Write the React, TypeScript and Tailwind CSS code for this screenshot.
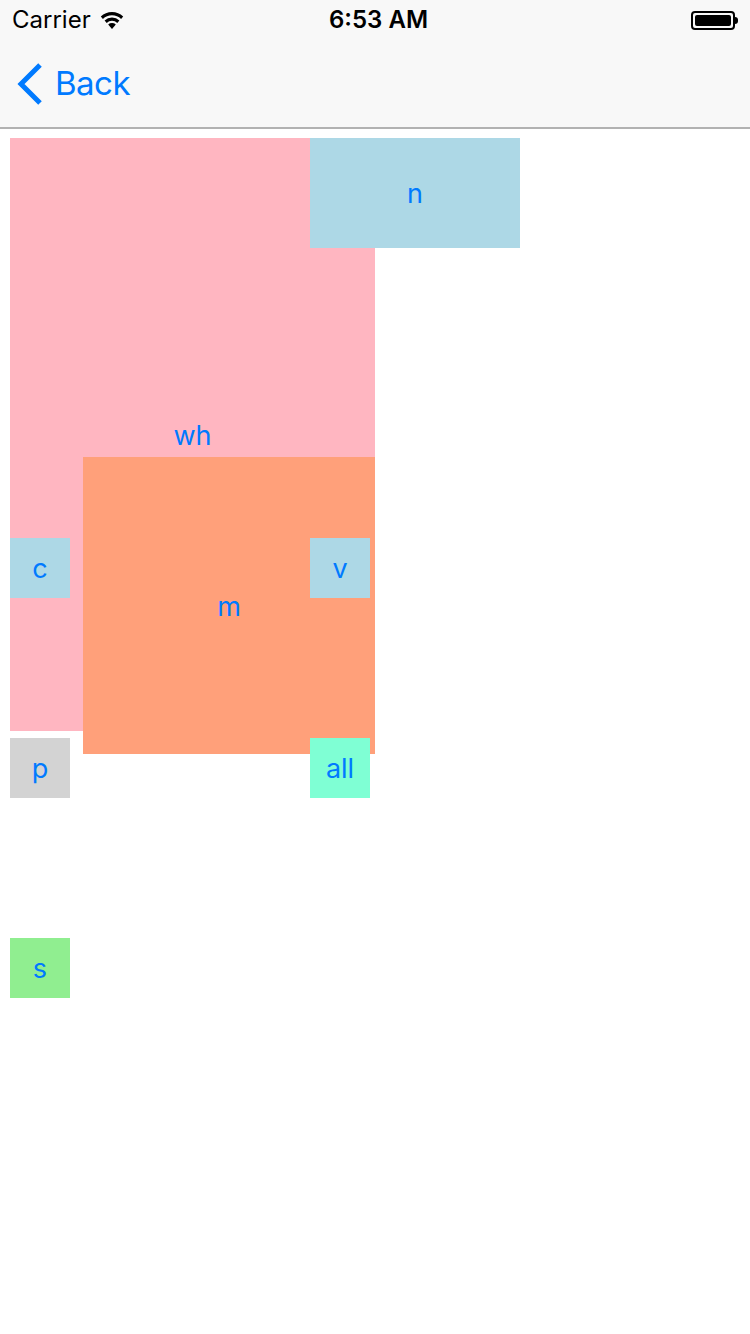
import type { ReactNode } from "react";

type Box = {
    label: string;
    className: string;
};

// positions are relative to the content area that starts under the nav bar (y = 129)
const boxes: Box[] = [
    { label: "wh", className: "left-[10px] top-[9px] w-[365px] h-[593px] bg-[#ffb6c1]" },
    { label: "n", className: "left-[310px] top-[9px] w-[210px] h-[110px] bg-[#add8e6]" },
    { label: "m", className: "left-[83px] top-[328px] w-[292px] h-[297px] bg-[#ffa07a]" },
    { label: "c", className: "left-[10px] top-[409px] w-[60px] h-[60px] bg-[#add8e6]" },
    { label: "v", className: "left-[310px] top-[409px] w-[60px] h-[60px] bg-[#add8e6]" },
    { label: "p", className: "left-[10px] top-[609px] w-[60px] h-[60px] bg-[#d3d3d3]" },
    { label: "all", className: "left-[310px] top-[609px] w-[60px] h-[60px] bg-[#7fffd4]" },
    { label: "s", className: "left-[10px] top-[809px] w-[60px] h-[60px] bg-[#90ee90]" },
];

function StatusBar(): ReactNode {
    return (
        <div className="relative flex h-10 items-center justify-between px-3 text-[24px] text-black">
            <div className="flex items-center gap-2">
                <span>Carrier</span>
                <svg width="26" height="20" viewBox="0 0 26 20" fill="#000">
                    <path d="M13 19 L9.2 14.6 A5.6 5.6 0 0 1 16.8 14.6 Z" />
                    <path d="M5.6 10.6 A10.6 10.6 0 0 1 20.4 10.6 L18.3 13 A7.6 7.6 0 0 0 7.7 13 Z" />
                    <path d="M1.8 6.5 A16 16 0 0 1 24.2 6.5 L22.1 8.9 A12.9 12.9 0 0 0 3.9 8.9 Z" />
                </svg>
            </div>
            <span className="absolute left-[329px] font-semibold">6:53 AM</span>
            <div className="flex items-center">
                <div className="flex h-[19px] w-[44px] items-center rounded-[4px] border-2 border-black p-[2px]">
                    <div className="h-full w-full rounded-[2px] bg-black" />
                </div>
                <div className="h-[7px] w-[3px] rounded-r-sm bg-black" />
            </div>
        </div>
    );
}

export default function App() {
    return (
        <div className="min-h-[1334px] w-[750px] bg-white font-['Inter','Liberation_Sans',sans-serif]">
            <div className="border-b-2 border-[#b2b2b2] bg-[#f8f8f8]">
                <StatusBar />
                <div className="flex h-[87px] items-center pl-[17px]">
                    <svg width="26" height="42" viewBox="0 0 26 42" className="mr-[12px]">
                        <path d="M23 2 L4 21 L23 40" fill="none" stroke="#007aff" strokeWidth="5" />
                    </svg>
                    <span className="text-[33px] tracking-[-0.5px] text-[#007aff]">Back</span>
                </div>
            </div>

            <div className="relative h-[1205px]">
                {boxes.map((box) => (
                    <div
                        key={box.label}
                        className={`absolute flex items-center justify-center pt-[3px] text-[27px] text-[#007aff] ${box.className}`}
                    >
                        {box.label}
                    </div>
                ))}
            </div>
        </div>
    );
}
